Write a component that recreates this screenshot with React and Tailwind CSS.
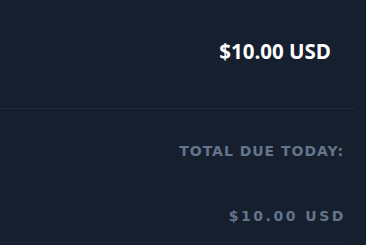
export default function App() {
  return (
    <div className="h-[245px] w-[366px] overflow-hidden bg-[#161f2e]">
      {/* Plan price */}
      <div className="flex h-[109px] w-[355px] justify-end border-b border-[#1f2a3a] pr-[24px] pt-[37px]">
        <span className="font-['Open_Sans',sans-serif] text-[20.5px] font-bold leading-[28px] text-white">
          $10.00 USD
        </span>
      </div>

      {/* Total */}
      <div className="flex h-[134px] w-[343px] flex-col items-end border-b border-[#1c2738] pt-[32px]">
        <span className="mr-[-1px] font-['DejaVu_Sans',sans-serif] text-[14px] font-bold uppercase leading-[20px] tracking-[0.07em] text-[#64748b]">
          Total due today:
        </span>
        <span className="mr-[-3px] mt-[45px] font-['DejaVu_Sans',sans-serif] text-[14px] font-bold leading-[20px] tracking-[0.18em] text-[#64748b]">
          $10.00 USD
        </span>
      </div>
    </div>
  );
}
